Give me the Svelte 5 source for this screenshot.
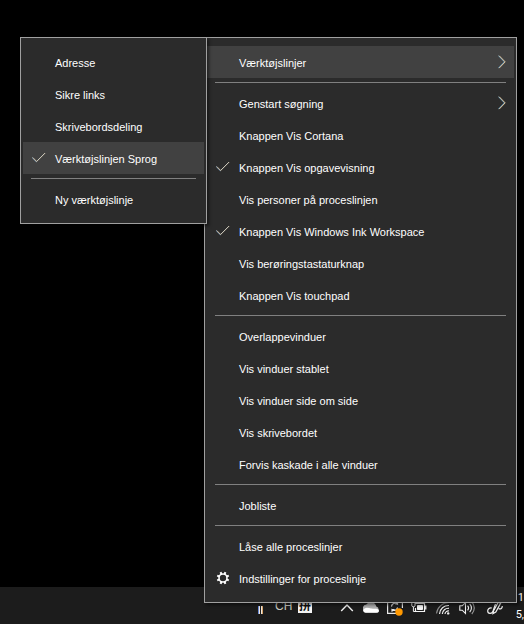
<script>
  const toolbars = [
    { label: 'Adresse' },
    { label: 'Sikre links' },
    { label: 'Skrivebordsdeling' },
    { label: 'Værktøjslinjen Sprog', icon: 'check', active: true },
    { separator: true },
    { label: 'Ny værktøjslinje' }
  ];

  const taskbarItems = [
    { label: 'Værktøjslinjer', submenu: true, active: true },
    { separator: true },
    { label: 'Genstart søgning', submenu: true },
    { label: 'Knappen Vis Cortana' },
    { label: 'Knappen Vis opgavevisning', icon: 'check' },
    { label: 'Vis personer på proceslinjen' },
    { label: 'Knappen Vis Windows Ink Workspace', icon: 'check' },
    { label: 'Vis berøringstastaturknap' },
    { label: 'Knappen Vis touchpad' },
    { separator: true },
    { label: 'Overlappevinduer' },
    { label: 'Vis vinduer stablet' },
    { label: 'Vis vinduer side om side' },
    { label: 'Vis skrivebordet' },
    { label: 'Forvis kaskade i alle vinduer' },
    { separator: true },
    { label: 'Jobliste' },
    { separator: true },
    { label: 'Låse alle proceslinjer' },
    { label: 'Indstillinger for proceslinje', icon: 'gear' }
  ];
</script>

{#snippet menu(items, kind)}
  <div class="menu {kind}" role="menu">
    {#each items as item}
      {#if item.separator}
        <div class="separator" role="separator"></div>
      {:else}
        <button class="item" class:active={item.active} role="menuitem">
          <span class="mark">
            {#if item.icon === 'check'}
              <svg width="16" height="16" viewBox="0 0 16 16" fill="none">
                <path d="M1.2 7.6 5.3 11.7 13.8 3.2" stroke="#86b2dc" />
                <path d="M1.9 7.6 5.7 11.5 14.2 3" stroke="#e8cda4" stroke-width=".8" />
              </svg>
            {:else if item.icon === 'gear'}
              <svg width="16" height="16" viewBox="0 0 16 16" fill="none" stroke="#fff">
                <circle cx="8" cy="8" r="4" stroke-width="1.6" />
                <path
                  d="M11.9 9.6 13.8 10.4M9.6 11.9l.8 1.9M6.4 11.9l-.8 1.9M4.1 9.6l-1.9.8M4.1 6.4l-1.9-.8M6.4 4.1l-.8-1.9M9.6 4.1l.8-1.9M11.9 6.4l1.9-.8"
                  stroke-width="2"
                />
              </svg>
            {/if}
          </span>
          <span class="label">{item.label}</span>
          {#if item.submenu}
            <svg class="arrow" width="8" height="14" viewBox="0 0 8 14" fill="none">
              <path d="M.5.7 6.5 6.9.5 13.1" stroke="#6cb8ea" />
              <path d="M1.2.7 7.2 6.9 1.2 13.1" stroke="#f4cc98" stroke-width=".9" />
            </svg>
          {/if}
        </button>
      {/if}
    {/each}
  </div>
{/snippet}

<div class="desktop">
  <main class="wallpaper"></main>

  <footer class="taskbar">
    <div class="grip"><i></i><i></i></div>
    <span class="lang">CH</span>
    <span class="ime">拼</span>
    <div class="tray">
      <span class="slot">
        <svg width="16" height="16" viewBox="0 0 16 16" fill="none" stroke="#f0f0f0" stroke-width="1.4">
          <path d="m2.2 11 5.8-6 5.8 6" />
        </svg>
      </span>
      <span class="slot">
        <svg width="16" height="16" viewBox="0 0 16 16">
          <path d="M3 12.5a4 4 0 0 1 .3-7.9 5.5 5.5 0 0 1 10 2A3 3 0 0 1 13 12.5z" fill="#b0b0b0" />
          <path d="M2.6 12.8C0 12.8-.6 9.6 1.6 8.4 4 7.2 6 8.2 8 8.6c3 .5 6-.8 7.6 1.2 1 1.500-.2 3-2 3z" fill="#fff" />
        </svg>
      </span>
      <span class="slot">
        <svg width="16" height="16" viewBox="0 0 16 16" fill="none" stroke="#e8e8e8" stroke-width="1.2">
          <path d="M3 1H.6v12.4h9M13 1h2.4v7" />
          <path d="M4.5 6.5a3.600 3.600 0 0 1 6-2.500V1.800M11 4H8.300M10.500 7.500a3.400 3.400 0 0 1-5.500 2.200v2M5 9.500h2.700" />
          <circle cx="12" cy="12" r="3.700" fill="#ff9800" stroke="none" />
        </svg>
      </span>
      <span class="slot">
        <svg width="16" height="16" viewBox="0 0 16 16" fill="none" stroke="#f4f4f4">
          <path d="M4 3.500h9.500v8H4.500V8M14.800 5.500v4" stroke-width="1.200" />
          <path d="M6.500 5.500h5v4h-5z" fill="#f4f4f4" />
          <path d="M.8 3v2.500c0 1.700 3.200 1.700 3.200 0V3M2.400 7v4.500h2" />
        </svg>
      </span>
      <span class="slot">
        <svg width="16" height="16" viewBox="0 0 16 16" fill="none" stroke-width="1.200">
          <path d="M1.500 13.500A12.500 12.500 0 0 1 14 2.500" stroke="#8a8a8a" />
          <path d="M4.500 14A9 9 0 0 1 14 5.500" stroke="#eee" />
          <path d="M7.300 14A6 6 0 0 1 14 8.300" stroke="#eee" />
          <path d="M10 14a3.400 3.400 0 0 1 4-3" stroke="#eee" />
          <circle cx="13.200" cy="13.400" r="1.200" fill="#eee" />
        </svg>
      </span>
      <span class="slot">
        <svg width="16" height="16" viewBox="0 0 16 16" fill="none" stroke="#f0f0f0" stroke-width="1.100">
          <path d="M.8 5.800h2.400l3.300-3.200v10.800L3.200 10.200H.8z" />
          <path d="M8.600 5.700a3.500 3.500 0 0 1 0 4.600M10.700 3.800a6 6 0 0 1 0 8.400" />
          <path d="M12.800 2a8.500 8.500 0 0 1 0 12" stroke="#999" />
        </svg>
      </span>
      <span class="slot pen">
        <svg width="16" height="16" viewBox="0 0 16 16" fill="none" stroke="#f0f0f0" stroke-width="1.200">
          <path d="M4.800 8C2 7.600.7 9.200.7 11c0 2.900 4.300 3.400 5.300.2L8.500 4" />
          <path d="m6 13.500.6-2.800L11.400 2l2.200 1.200L8.800 12z" />
          <path d="M11.500 8.500c1.800 1 3.800.3 3.800-2.500" />
        </svg>
      </span>
    </div>
    <div class="clock"><span>1</span><span>5,</span></div>
  </footer>

  <div class="menus">
    {@render menu(toolbars, 'sub')}
    {@render menu(taskbarItems, 'primary')}
  </div>
</div>

<style>
  :global(body) {
    margin: 0;
    background: #000;
  }

  .desktop {
    position: relative;
    display: flex;
    flex-direction: column;
    min-height: 100vh;
    overflow: hidden;
    background: #000;
    color: #fff;
    font-family: 'Liberation Sans', 'Noto Sans CJK SC', sans-serif;
    font-size: 11px;
  }

  .wallpaper {
    flex: 1;
  }

  .menus {
    position: absolute;
    top: 37px;
    left: 20px;
    right: 7px;
    display: flex;
    align-items: flex-start;
  }

  .menu {
    box-sizing: border-box;
    padding: 8px 2px;
    border: 1px solid #a0a0a0;
    background: #2b2b2b;
    box-shadow: 2px 2px 3px rgba(0, 0, 0, 0.5);
  }

  .sub {
    z-index: 1;
    flex: 0 0 187px;
  }

  .primary {
    flex: 1;
    margin-left: -3px;
  }

  .item {
    display: flex;
    align-items: center;
    width: 100%;
    height: 32px;
    padding: 0 8px;
    border: 0;
    background: none;
    color: inherit;
    font: inherit;
    line-height: 16px;
    text-align: left;
    white-space: nowrap;
  }

  .item.active {
    background: #414141;
  }

  .mark {
    display: flex;
    width: 24px;
  }

  .label {
    flex: 1;
    padding-top: 2px;
  }

  .separator {
    height: 1px;
    margin: 4px 8px;
    background: #808080;
  }

  .taskbar {
    display: flex;
    align-items: center;
    justify-content: flex-end;
    height: 37px;
    background: #1c1c1c;
  }

  .grip {
    display: flex;
    gap: 1px;
    margin-right: 12px;
    padding-top: 8px;
  }

  .grip i {
    width: 1px;
    height: 8px;
    border: solid #6c8cd8;
    border-width: 0 0 0 1px;
    background: #f0e8e0;
    border-top: 0;
    padding-right: 0;
    box-shadow: 0 -5px 0 -1px #444;
  }

  .grip i:last-child {
    border-color: #f0e8e0;
    background: #d8a468;
  }

  .lang {
    width: 23px;
    color: #c8c8c0;
    font-size: 12px;
  }

  .ime {
    width: 14px;
    height: 14px;
    margin-right: 23px;
    background: #f4f4f4;
    color: #111;
    font-size: 12px;
    font-weight: 700;
    line-height: 14px;
    text-align: center;
  }

  .tray {
    display: flex;
    padding-top: 4px;
  }

  .slot {
    display: flex;
    justify-content: center;
    width: 24px;
  }

  .pen {
    width: 32px;
  }

  .clock {
    display: flex;
    flex-direction: column;
    width: 9px;
    padding-left: 4px;
    font-family: Roboto, 'Liberation Sans', sans-serif;
    line-height: 17px;
    text-align: right;
  }
</style>
